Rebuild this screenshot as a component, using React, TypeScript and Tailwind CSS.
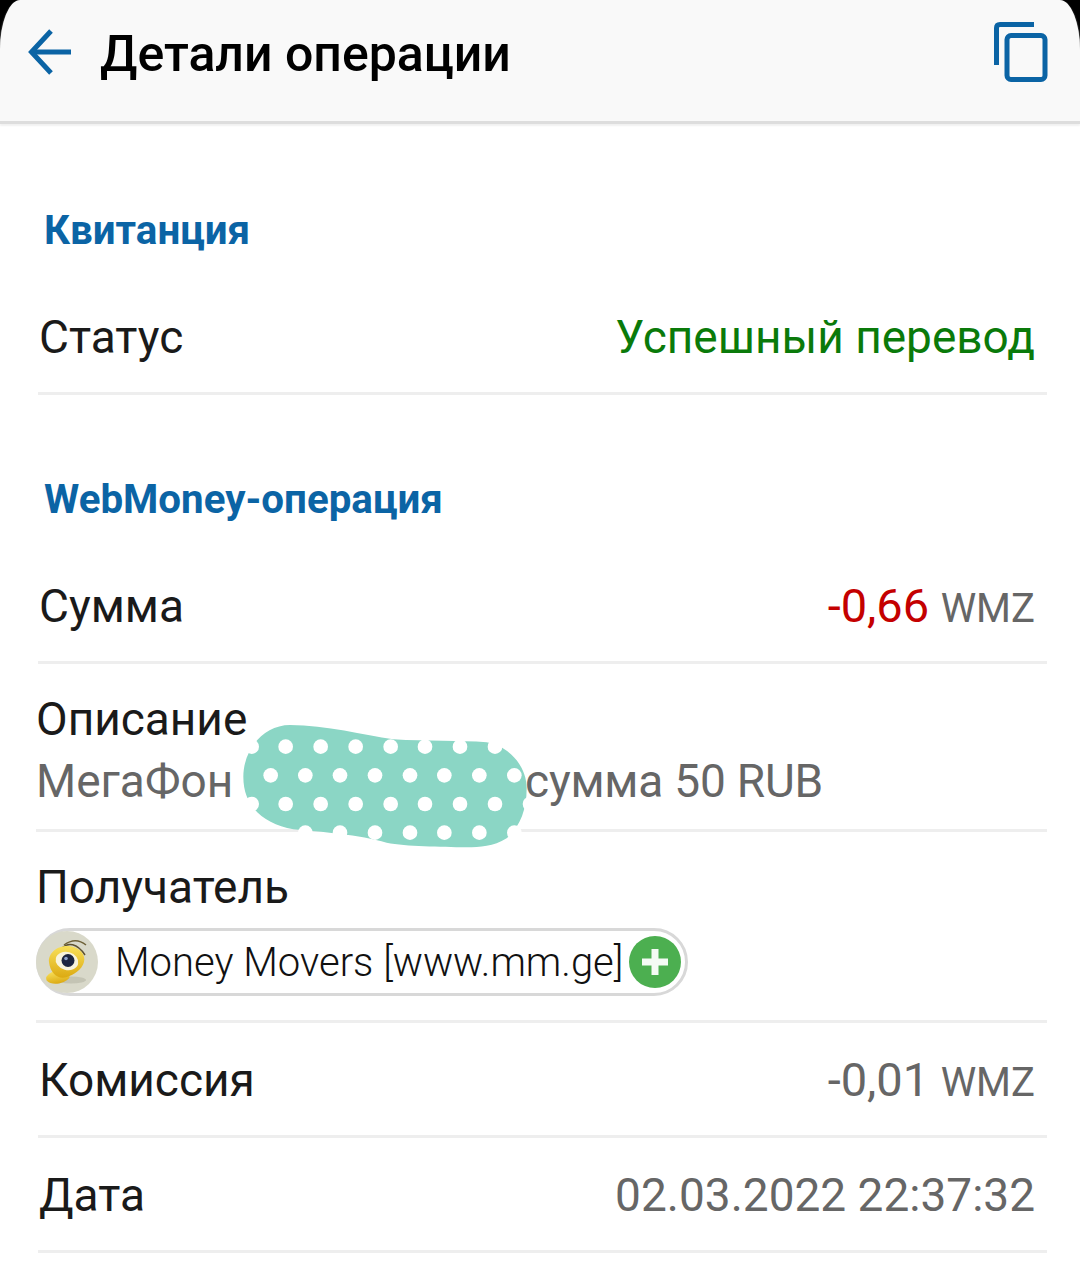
const font = { fontFamily: "Roboto, sans-serif" };

function Row({ label, children }: { label: string; children: React.ReactNode }) {
  return (
    <div className="ml-[38px] mr-[33px] flex h-[115px] items-center justify-between border-b-[3px] border-[#eeeeee] pl-[1px] pr-[12px] pt-[1px]">
      <span className="text-[46px] leading-none text-[#1a1a1a]">{label}</span>
      <span className="text-[46px] leading-none text-[#666666]">{children}</span>
    </div>
  );
}

function SectionTitle({ children }: { children: React.ReactNode }) {
  return (
    <h2 className="flex h-[107px] items-end pb-[29px] pl-[44px] text-[40.300px] font-bold leading-none text-[#0b64a5]">
      {children}
    </h2>
  );
}

function Blob() {
  const rowA = [95, 197, 302, 407, 512, 615, 720, 825];
  const rowB = [152, 256, 360, 465, 570, 673, 778, 883];
  return (
    <svg
      className="absolute left-[220px] top-[710px] h-[150px] w-[330px]"
      viewBox="0 0 990 450"
    >
      <path
        d="M70 200C70 120 130 45 210 45C320 45 430 75 520 88C620 95 720 90 800 97C870 110 920 170 920 235C920 300 900 350 860 385C820 410 780 412 740 412C660 410 560 410 500 398C420 375 300 365 220 358C130 340 70 290 70 200Z"
        fill="#8bd6c5"
      />
      {rowA.map((x) => (
        <circle key={`a${x}`} cx={x} cy={110} r={22} fill="#fff" />
      ))}
      {rowB.map((x) => (
        <circle key={`b${x}`} cx={x} cy={196} r={22} fill="#fff" />
      ))}
      {[...rowA, 930].map((x) => (
        <circle key={`c${x}`} cx={x} cy={282} r={22} fill="#fff" />
      ))}
      {rowB.slice(1).map((x) => (
        <circle key={`d${x}`} cx={x} cy={368} r={22} fill="#fff" />
      ))}
    </svg>
  );
}

function AntLogo() {
  return (
    <svg viewBox="0 0 62 64" className="h-[64px] w-[62px]">
      <defs>
        <linearGradient id="ant" x1="0" y1="0" x2="0" y2="1">
          <stop offset="0" stopColor="#f8e05a" />
          <stop offset="1" stopColor="#dcaa12" />
        </linearGradient>
      </defs>
      <circle cx="31" cy="32" r="31" fill="#d9d9ca" />
      <ellipse cx="35" cy="50" rx="15" ry="3.500" fill="#c4c4b4" />
      <path d="M26 18C32 12 41 13 49 25" fill="none" stroke="#5e5230" strokeWidth="1.500" />
      <path d="M28 15C36 9 44 10 50 15" fill="none" stroke="#6e6138" strokeWidth="1.500" />
      <ellipse cx="22" cy="47" rx="12" ry="6.500" transform="rotate(-10 22 47)" fill="url(#ant)" />
      <path
        d="M13 32C12 22 23 15 33 16C44 17 50 25 48 32C46 40 37 45 31 47C22 50 14 43 13 32Z"
        fill="url(#ant)"
      />
      <ellipse cx="31" cy="31" rx="11.500" ry="9" transform="rotate(15 31 31)" fill="#f8f4dc" />
      <circle cx="32" cy="30.500" r="6.500" fill="#1c2540" />
      <circle cx="30" cy="28.500" r="1.800" fill="#8fa3cc" />
    </svg>
  );
}

export default function App() {
  return (
    <div className="relative h-[1264px] w-[1080px] overflow-hidden bg-white" style={font}>
      <div className="bg-black">
        <header className="flex h-[124px] items-center justify-between rounded-t-[20px_50px] border-b-[3px] border-[#dddddd] bg-[#f9f9f9] pb-[18px] pl-[28px] pr-[32px] shadow-[0_2px_2px_#f1f1f1]">
          <div className="flex items-center gap-[26px]">
            <svg viewBox="0 0 46 46" className="h-[46px] w-[46px]" fill="none" stroke="#0b64a5" strokeWidth="5">
              <path d="M43 23H4" />
              <path d="M23 2L3.500 23L23 44" />
            </svg>
            <h1 className="mt-[5px] text-[50px] font-medium leading-none text-black">Детали операции</h1>
          </div>
          <svg viewBox="0 0 54 60" className="h-[60px] w-[54px]" fill="none" stroke="#0b64a5" strokeWidth="5">
            <path d="M2.500 43V6Q2.500 2.500 6 2.500H40" />
            <rect x="13" y="13.500" width="38" height="44" rx="4" />
          </svg>
        </header>
      </div>

      <div className="h-[49px]" />
      <SectionTitle>Квитанция</SectionTitle>
      <Row label="Статус">
        <span className="text-[#0a7a0a]">Успешный перевод</span>
      </Row>
      <div className="h-[47px]" />
      <SectionTitle>WebMoney-операция</SectionTitle>
      <Row label="Сумма">
        <span className="text-[47px] text-[#c40000]">-0,66</span> <span className="text-[40px]">WMZ</span>
      </Row>

      <div className="ml-[36px] mr-[33px] h-[168px] border-b-[3px] border-[#eeeeee] pt-[33px]">
        <div className="text-[46px] leading-[44px] text-[#1a1a1a]">Описание</div>
        <div className="mt-[18px] flex text-[46px] leading-[44px] text-[#666666]">
          <span className="w-[489px]">МегаФон</span>
          <span className="tracking-[-0.2px]">сумма 50 RUB</span>
        </div>
      </div>

      <div className="ml-[36px] mr-[33px] h-[191px] border-b-[3px] border-[#eeeeee] pt-[33px]">
        <div className="text-[46px] leading-[44px] text-[#1a1a1a]">Получатель</div>
        <div className="mt-[19px] flex h-[68px] w-[652px] items-center rounded-full border-[3px] border-[#d8d8d8]">
          <div className="-ml-[3px]">
            <AntLogo />
          </div>
          <span className="ml-[17px] mt-[2px] text-[40px] font-light leading-none text-[#111111]">
            Money Movers [www.mm.ge]
          </span>
          <span className="ml-[6px] flex h-[52px] w-[52px] items-center justify-center rounded-full bg-[#4caf50]">
            <svg viewBox="0 0 28 28" className="h-[28px] w-[28px]" stroke="#f4fbf4" strokeWidth="7">
              <path d="M14 1V27M1 14H27" />
            </svg>
          </span>
        </div>
      </div>

      <Row label="Комиссия">
        <span className="text-[47px]">-0,01</span> <span className="text-[40px]">WMZ</span>
      </Row>
      <Row label="Дата">02.03.2022 22:37:32</Row>

      <Blob />
    </div>
  );
}
